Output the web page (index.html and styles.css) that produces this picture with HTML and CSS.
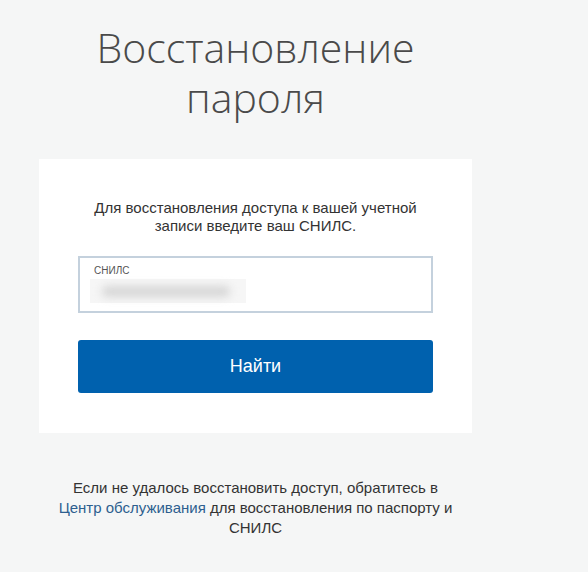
FILE: index.html
```html
<!DOCTYPE html>
<html lang="ru">
<head>
<meta charset="utf-8">
<title>Восстановление пароля</title>
<link rel="stylesheet" href="styles.css">
</head>
<body>
<main class="page">
  <h1 class="title">Восстановление<br>пароля</h1>
  <section class="card">
    <p class="intro">Для восстановления доступа к вашей учетной записи введите ваш СНИЛС.</p>
    <div class="field">
      <span class="field-label">СНИЛС</span>
      <span class="field-value"><span class="blur"></span></span>
    </div>
    <button class="btn" type="button">Найти</button>
  </section>
  <p class="note">Если не удалось восстановить доступ, обратитесь в <a class="link" href="#">Центр обслуживания</a> для восстановления по паспорту и СНИЛС</p>
</main>
</body>
</html>
```

FILE: styles.css
```css
html, body {
  margin: 0;
  padding: 0;
  background: #f5f6f6;
}
body {
  font-family: "Liberation Sans", Arial, sans-serif;
  color: #333;
}
.page {
  width: 433px;
  margin-left: 39px;
  padding-top: 22px;
}
.title {
  margin: 0;
  font-family: "Open Sans", "Noto Sans", sans-serif;
  font-weight: 300;
  font-size: 41px;
  line-height: 50px;
  color: #4a4a4a;
  text-align: center;
}
.card {
  margin-top: 37px;
  background: #fff;
  padding: 40px 39px 40px;
  display: flex;
  flex-direction: column;
}
.intro {
  margin: 0 auto;
  width: 330px;
  font-size: 15px;
  line-height: 18px;
  text-align: center;
  color: #333;
}
.field {
  margin-top: 21px;
  height: 57px;
  box-sizing: border-box;
  border: 2px solid #c4d1dd;
  padding: 7px 14px 0 14px;
  display: flex;
  flex-direction: column;
}
.field-label {
  font-size: 10px;
  line-height: 12px;
  color: #555;
}
.field-value {
  margin-top: 2px;
  margin-left: -4px;
  height: 24px;
  width: 156px;
  background: #f6f6f6;
  display: flex;
  align-items: center;
  padding-left: 12px;
  box-sizing: border-box;
}
.blur {
  display: block;
  width: 128px;
  height: 11px;
  background: #d6d6d6;
  filter: blur(4px);
  border-radius: 5px;
}
.btn {
  margin-top: 27px;
  height: 53px;
  border: 0;
  border-radius: 3px;
  background: #0061ae;
  color: #fff;
  font-family: "Liberation Sans", Arial, sans-serif;
  font-size: 18px;
  padding: 0;
}
.note {
  margin: 45px auto 0;
  width: 400px;
  font-size: 15px;
  line-height: 20px;
  text-align: center;
  color: #333;
}
.link {
  color: #2d5f8f;
  text-decoration: none;
}
```
